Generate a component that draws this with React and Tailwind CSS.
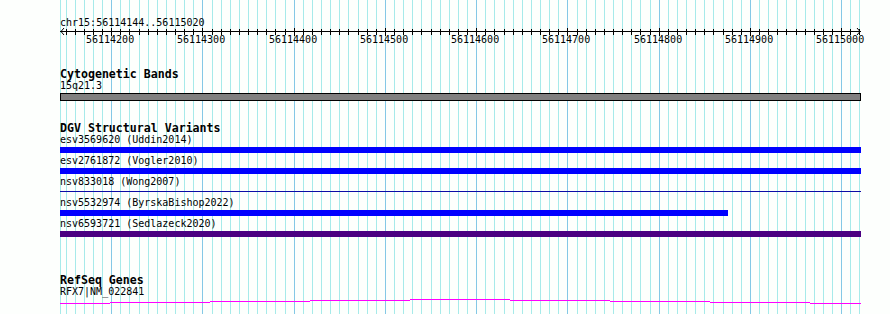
import React from 'react';

const START = 56114144;
const END = 56115020;

// bp -> pixel column on the 890px canvas
const xOf = (p) => Math.floor(60.6 + (p - START) * 0.9125);

const ticks = [];
for (let p = 56114150; p <= END; p += 10) {
    ticks.push({ p, x: xOf(p), major: p % 100 === 0 });
}

const variants = [
    { label: 'esv3569620 (Uddin2014)', kind: 'bar', color: 'bg-[#0000ff]', width: 'w-full' },
    { label: 'esv2761872 (Vogler2010)', kind: 'bar', color: 'bg-[#0000ff]', width: 'w-full' },
    { label: 'nsv833018 (Wong2007)', kind: 'line' },
    { label: 'nsv5532974 (ByrskaBishop2022)', kind: 'bar', color: 'bg-[#0000ff]', width: 'w-[668px]' },
    { label: 'nsv6593721 (Sedlazeck2020)', kind: 'bar', color: 'bg-[#4b0082]', width: 'w-full' },
];

// intron "hat" of RFX7 across the view, as [x0, x1, row]
const geneSteps = [
    [60, 110, 4],
    [110, 210, 3],
    [210, 310, 2],
    [310, 410, 1],
    [410, 510, 0],
    [510, 610, 1],
    [610, 710, 2],
    [710, 810, 3],
    [810, 861, 4],
];

const Grid = () => (
    <svg className="absolute inset-0" width="890" height="314" shapeRendering="crispEdges">
        <rect x="60" y="0" width="1" height="314" fill="#a6eaea" />
        {ticks.map((t) => (
            <rect key={t.p} x={t.x} y="0" width="1" height="314" fill={t.major ? '#84c8e6' : '#a6eaea'} />
        ))}
    </svg>
);

const Ruler = () => (
    <svg className="block" width="890" height="50" shapeRendering="crispEdges">
        <text x="60" y="26" fontFamily="'DejaVu Sans Mono', monospace" fontSize="10" fill="#000">
            chr15:{START}..{END}
        </text>
        <rect x="60" y="31" width="801" height="1" fill="#000" />
        {/* arrow heads */}
        <polyline points="64,28 61,31.5 64,35" fill="none" stroke="#000" strokeWidth="1" shapeRendering="auto" />
        <polyline points="857,28 860,31.5 857,35" fill="none" stroke="#000" strokeWidth="1" shapeRendering="auto" />
        {ticks.map((t) => (
            <rect key={t.p} x={t.x} y={t.major ? 28 : 29} width="1" height={t.major ? 8 : 6} fill="#000" />
        ))}
        {ticks.filter((t) => t.major).map((t) => (
            <text key={t.p} x={t.x - 25} y="43" fontFamily="'DejaVu Sans Mono', monospace" fontSize="10" fill="#000">
                {t.p}
            </text>
        ))}
    </svg>
);

const TrackTitle = ({ children, className = '' }) => (
    <div className={`h-[12px] leading-[14px] text-[11.6px] font-bold whitespace-nowrap ${className}`}>{children}</div>
);

const Label = ({ children }) => (
    <div className="h-[14px] leading-[14px] text-[10px] whitespace-nowrap">{children}</div>
);

export default function App() {
    return (
        <div className="relative w-[890px] h-[314px] overflow-hidden bg-[#fdfffd] text-black font-['DejaVu_Sans_Mono',monospace]">
            <Grid />

            <div className="relative flex flex-col">
                <Ruler />

                <div className="pl-[60px] w-[861px] flex flex-col">
                    {/* Cytogenetic Bands */}
                    <TrackTitle className="mt-[17px]">Cytogenetic Bands</TrackTitle>
                    <Label>15q21.3</Label>
                    <div className="h-[8px] w-full border border-black bg-[#808080]" />

                    {/* DGV Structural Variants */}
                    <TrackTitle className="mt-[20px]">DGV Structural Variants</TrackTitle>
                    {variants.map((v) => (
                        <div key={v.label} className="h-[21px] flex flex-col">
                            <Label>{v.label}</Label>
                            {v.kind === 'bar' ? (
                                <div className={`h-[6px] ${v.width} ${v.color}`} />
                            ) : (
                                <div className="h-[6px] pt-[2px]">
                                    <div className="h-[1px] w-full bg-[#0c0ca6]" />
                                </div>
                            )}
                        </div>
                    ))}

                    {/* RefSeq Genes */}
                    <TrackTitle className="mt-[35px]">RefSeq Genes</TrackTitle>
                    <Label>RFX7|NM_022841</Label>
                    <svg className="block" width="801" height="6" shapeRendering="crispEdges">
                        {geneSteps.map(([a, b, row]) => (
                            <rect key={a} x={a - 60} y={row} width={b - a} height="1" fill="#ff00ff" />
                        ))}
                    </svg>
                </div>
            </div>
        </div>
    );
}
